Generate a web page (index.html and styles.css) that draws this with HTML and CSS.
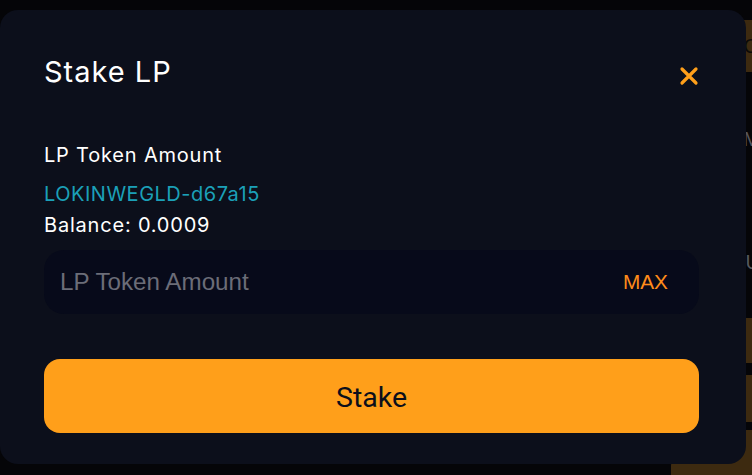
FILE: index.html
```html
<!DOCTYPE html>
<html lang="en">
<head>
<meta charset="utf-8">
<title>Stake LP</title>
<link rel="stylesheet" href="styles.css">
</head>
<body>
<div class="page">
  <div class="side">
    <div class="block b1"><span class="glyph">C</span></div>
    <div class="ghost g1">M</div>
    <div class="ghost g2">U</div>
    <div class="block b2"></div>
    <div class="block b3"><span class="glyph">t</span></div>
    <div class="block b4"></div>
  </div>
</div>

<div class="modal" role="dialog" aria-labelledby="title">
  <div class="modal-head">
    <h2 id="title" class="title">Stake LP</h2>
    <button class="close" aria-label="Close">
      <svg width="20" height="20" viewBox="0 0 20 20" fill="none">
        <path d="M3 3 L17 17 M17 3 L3 17" stroke="#ff9f1a" stroke-width="3.2" stroke-linecap="round"/>
      </svg>
    </button>
  </div>
  <div class="info">
    <div class="label">LP Token Amount</div>
    <div class="token">LOKINWEGLD-d67a15</div>
    <div class="balance">Balance: 0.0009</div>
  </div>
  <div class="field">
    <input class="amount" type="text" placeholder="LP Token Amount">
    <button class="max">MAX</button>
  </div>
  <button class="stake">Stake</button>
</div>
</body>
</html>
```
FILE: styles.css
```css
* { box-sizing: border-box; }
html, body {
  margin: 0;
  padding: 0;
  width: 752px;
  height: 475px;
  overflow: hidden;
  background: #050508;
}
body { position: relative; }

.page {
  display: flex;
  justify-content: flex-end;
  height: 100%;
}
.side {
  width: 150px;
  display: flex;
  flex-direction: column;
  padding-top: 20px;
}
.block {
  background: #3d2a10;
  color: #0c0a08;
  font: 20px "Liberation Sans", sans-serif;
  display: flex;
  align-items: center;
  justify-content: flex-end;
}
.glyph { margin-right: -6px; }
.b1 { height: 52px; }
.ghost {
  color: #55575e;
  font: 20px "Liberation Sans", sans-serif;
  text-align: right;
  margin-right: -8px;
}
.g1 { margin-top: 56px; }
.g2 { margin-top: 100px; }
.b2 { height: 45px; margin-top: 44px; }
.b3 { height: 47px; margin-top: 12px; }
.b4 { flex: 1; margin-top: 8px; margin-left: 69px; border-radius: 36px 0 0 0; }

.modal {
  position: absolute;
  left: 0;
  top: 10px;
  width: 746px;
  height: 454px;
  background: #0c0f1b;
  border-radius: 18px;
  padding: 41px 47px 0 44px;
  display: flex;
  flex-direction: column;
  font-family: "Inter", "Open Sans", sans-serif;
  color: #ffffff;
}
.modal-head {
  display: flex;
  justify-content: space-between;
  align-items: flex-start;
}
.title {
  margin: 0;
  font-size: 29px;
  font-weight: 400;
  line-height: 41px;
  letter-spacing: 1px;
}
.close {
  background: none;
  border: 0;
  padding: 0;
  margin: 15px 0 0 0;
  width: 20px;
  height: 20px;
  display: block;
  cursor: pointer;
}
.close svg { display: block; }

.info {
  margin-top: 50px;
  display: flex;
  flex-direction: column;
  font-size: 20px;
  letter-spacing: 0.8px;
}
.label { line-height: 26px; }
.token { color: #1ba0b8; line-height: 26px; margin-top: 13px; letter-spacing: 0.5px; }
.balance { line-height: 26px; margin-top: 5px; }

.field {
  margin-top: 12px;
  height: 64px;
  background: #070a1a;
  border-radius: 20px;
  display: flex;
  align-items: center;
  padding: 0 31px 0 16px;
}
.amount {
  flex: 1;
  min-width: 0;
  background: transparent;
  border: 0;
  outline: none;
  color: #ffffff;
  font: 24.2px "Liberation Sans", Arial, sans-serif;
  padding: 0;
}
.amount::placeholder { color: #6b6d78; }
.max {
  background: none;
  border: 0;
  padding: 0;
  color: #ff8c1a;
  font: 20.8px "Liberation Sans", Arial, sans-serif;
  cursor: pointer;
}

.stake {
  margin-top: 45px;
  height: 74px;
  border: 0;
  border-radius: 16px;
  background: #ff9f1a;
  color: #0c0f1b;
  font: 28.5px "Roboto", sans-serif;
  padding: 3px 0 0;
  cursor: pointer;
}
```
